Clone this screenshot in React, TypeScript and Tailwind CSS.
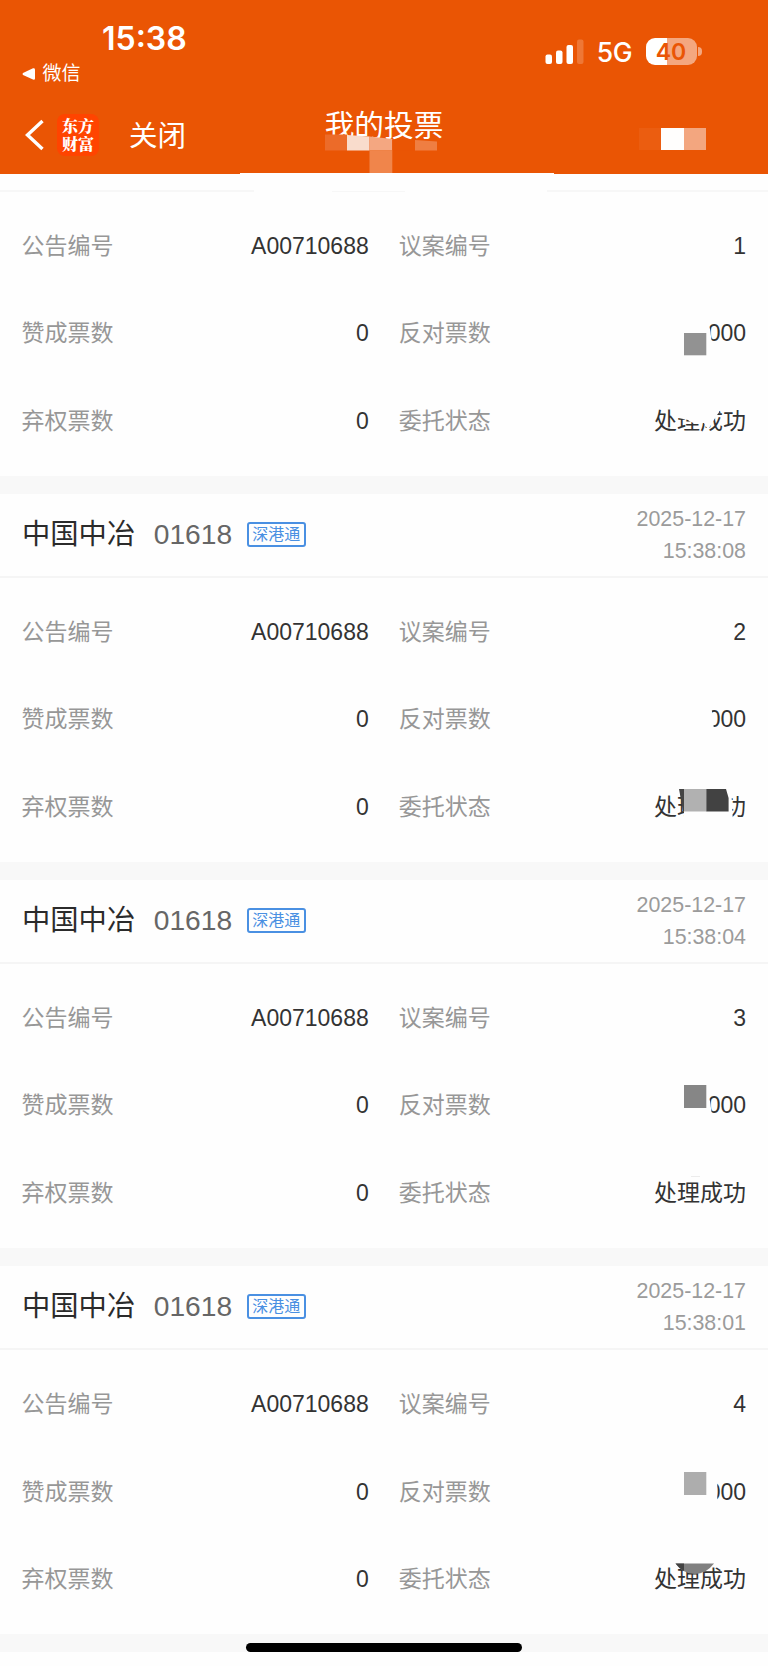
import type { ReactNode } from 'react'

interface VoteRecord {
  id: number
  time: string
  against: string
  marks: ReactNode
}

// marks use the coordinates of the right-hand 168px strip of a record body
const records: VoteRecord[] = [
  {
    id: 1,
    time: '',
    against: '000',
    marks: (
      <>
        <path d="M100 118 L107.5 130 L110 137 L112.5 155 L100 155 Z" fill="#fefefe" />
        <rect x="84" y="141" width="22.3" height="22.3" fill="#929292" />
        <path d="M76 212 V225.5 L88 228 Q92 232.5 104 231 L108 238 Q113 229 119 220 V212 Z" fill="#fefefe" />
      </>
    ),
  },
  {
    id: 2,
    time: '15:38:08',
    against: '000',
    marks: (
      <>
        <path d="M100 125 H110 L113 138 L114 155 H100 Z" fill="#fefefe" />
        <path d="M84 205 H131 L133 246 H84 Z" fill="#fefefe" />
        <path d="M79 211 H84.5 V233 H83 Z" fill="#444444" />
        <rect x="84" y="211" width="22.3" height="22.5" fill="#b1b1b1" />
        <path d="M106.3 211 H126 L128.6 220 V233.5 H106.3 Z" fill="#424242" />
      </>
    ),
  },
  {
    id: 3,
    time: '15:38:04',
    against: '000',
    marks: (
      <>
        <path d="M100 118 L107.5 130 L110 137 L112.5 155 L100 155 Z" fill="#fefefe" />
        <rect x="84" y="121" width="22.3" height="23" fill="#868686" />
        <rect x="91" y="212" width="9" height="1" fill="#ececec" />
      </>
    ),
  },
  {
    id: 4,
    time: '15:38:01',
    against: '000',
    marks: (
      <>
        <rect x="100" y="125" width="17.3" height="30" fill="#fefefe" />
        <rect x="84" y="122" width="22.3" height="23" fill="#adadad" />
        <path d="M75.5 213.5 H114 Q106 224 95 224 Q83 224 75.5 213.5 Z" fill="#808080" />
        <path d="M75.5 213.5 H84 V221 Q79 218.5 75.5 213.5 Z" fill="#424242" />
      </>
    ),
  },
]

const Field = ({ label, value }: { label: string; value: string }) => (
  <div className="flex h-[87.7px] items-center justify-between">
    <span className="text-[#979797]">{label}</span>
    <span className="text-[#333333]">{value}</span>
  </div>
)

const RecordBody = ({ record }: { record: VoteRecord }) => (
  <div className="relative h-[284px] pt-[10px] pr-[22px] pl-[21.5px]">
    <div className="grid grid-cols-2 gap-x-[30px] text-[23px]">
      <Field label="公告编号" value="A00710688" />
      <Field label="议案编号" value={String(record.id)} />
      <Field label="赞成票数" value="0" />
      <Field label="反对票数" value={record.against} />
      <Field label="弃权票数" value="0" />
      <Field label="委托状态" value="处理成功" />
    </div>
    <svg className="absolute top-0 right-0" width="168" height="284" viewBox="0 0 168 284">
      {record.marks}
    </svg>
  </div>
)

const RecordHeader = ({ time }: { time: string }) => (
  <div className="flex h-[84.6px] items-center justify-between border-b-2 border-[#f5f5f5] px-[22px]">
    <div className="flex items-center">
      <span className="pb-[2px] text-[28.3px] text-[#2b2b2b]">中国中冶</span>
      <span className="ml-[18.5px] pb-[2px] text-[28.2px] text-[#666666]">01618</span>
      <span className="ml-[14.5px] flex h-[25px] w-[59.5px] items-center justify-center rounded-[3px] border-2 border-[#4a90e2] text-[16px] text-[#4a90e2]">
        深港通
      </span>
    </div>
    <div className="text-right text-[21.4px] leading-[32.3px] text-[#9b9b9b]">
      <div>2025-12-17</div>
      <div>{time}</div>
    </div>
  </div>
)

const SignalIcon = () => (
  <svg width="40" height="26" viewBox="0 0 40 26" fill="#fff">
    <rect x="0.5" y="15.5" width="6.5" height="9.5" rx="2" />
    <rect x="11" y="11.5" width="6.5" height="13.5" rx="2" />
    <rect x="21.5" y="6" width="6.5" height="19" rx="2" />
    <rect x="32" y="0.5" width="6.5" height="24.5" rx="2" opacity="0.2" />
  </svg>
)

const Battery = () => (
  <div className="flex items-center">
    <div className="flex h-[27px] w-[51px] items-center justify-center rounded-[9px] bg-linear-to-r from-white from-[41%] to-[#f4a77f] to-[41%] pt-[1px] font-[Inter] text-[23px] font-semibold text-[#ea5504]">
      40
    </div>
    <div className="ml-[1.5px] h-[9px] w-[3.5px] rounded-r-full bg-[#f4a77f]" />
  </div>
)

const TopBar = () => (
  <header className="relative h-[174px] bg-[#ea5504] text-white">
    <div className="flex h-[96px] justify-between">
      <div className="pt-[20px]">
        <div className="pl-[102px] font-[Inter] text-[32px] leading-[38px] font-semibold">15:38</div>
        <div className="mt-[5px] flex items-center pl-[22px] text-[19px] leading-[22px]">
          <svg className="mr-[7.5px]" width="13" height="12" viewBox="0 0 13 12" fill="#fff">
            <path d="M1 5 L11 0.3 Q13 0 13 1.5 V10.5 Q13 12 11 11.6 L1 7 Q0 6 1 5 Z" />
          </svg>
          微信
        </div>
      </div>
      <div className="flex h-[103px] items-center pr-[66.5px]">
        <SignalIcon />
        <span className="mr-[13.5px] ml-[12px] pt-[3px] font-[Inter] text-[26.5px] font-medium tracking-[-0.5px]">5G</span>
        <Battery />
      </div>
    </div>
    <div className="grid h-[78px] grid-cols-3 items-center">
      <div className="flex items-center pl-[25px]">
        <svg width="19" height="32" viewBox="0 0 19 32" fill="none" stroke="#fff" strokeWidth="3.4">
          <path d="M17.5 2 L2.5 16 L17.5 30" />
        </svg>
        <div className="ml-[13px] flex h-[42px] w-[42px] items-center justify-center rounded-[8px] bg-[#ff4400]">
          <span className="block w-[32px] font-['Noto_Serif_CJK_SC','Noto_Sans_CJK_SC',serif] text-[16px] leading-[18px] font-black break-all">
            东方财富
          </span>
        </div>
        <span className="ml-[30px] pt-[2px] text-[28.5px]">关闭</span>
      </div>
      <div className="pb-[18px] text-center text-[29.7px] leading-[40px]">我的投票</div>
      <div className="flex justify-end pt-[8px] pr-[62px]">
        <div className="h-[22.5px] w-[22px] bg-[#eb5d10]" />
        <div className="h-[22.5px] w-[22.5px] bg-[#fffefd]" />
        <div className="h-[22.5px] w-[22.5px] bg-[#f3a67f]" />
      </div>
    </div>
    <svg className="absolute top-[130px] left-[230px]" width="340" height="44" viewBox="0 0 340 44">
      <path d="M95 4.5 H117 V20.5 H95 Z" fill="#ec6b29" />
      <path d="M117 5 L139.5 6.5 V20.5 H117 Z" fill="#f9dccc" />
      <path d="M139.5 6.5 L162.3 9 V20.5 H139.5 Z" fill="#f4a781" />
      <path d="M162.3 10 L185 9.5 V20.5 H162.3 Z" fill="#ea5504" />
      <rect x="139.5" y="20.5" width="22.8" height="22.8" fill="#f0854b" />
      <path d="M185 10 L207 11.5 V20.5 H185 Z" fill="#ef7e42" />
      <rect x="10" y="43" width="314" height="1" fill="#fefefe" />
    </svg>
  </header>
)

export default function App() {
  return (
    <div className="relative h-[1666px] w-[768px] overflow-hidden bg-[#fefefe] font-['Liberation_Sans','Noto_Sans_CJK_SC',sans-serif]">
      <TopBar />
      <div className="flex h-[18px] items-end justify-between">
        <div className="h-[2px] w-[254px] bg-[#f7f7f7]" />
        <div className="h-px w-[73px] bg-[#f7f7f7]" />
        <div className="ml-[64px] h-[2px] w-[221px] bg-[#f7f7f7]" />
      </div>
      {records.map((record) => (
        <div key={record.id}>
          {record.time && <RecordHeader time={record.time} />}
          <RecordBody record={record} />
          <div className="h-[17.5px] bg-[#f8f8f8]" />
        </div>
      ))}
      <div className="absolute bottom-[14px] left-[246px] h-[9px] w-[276px] rounded-full bg-black" />
    </div>
  )
}
